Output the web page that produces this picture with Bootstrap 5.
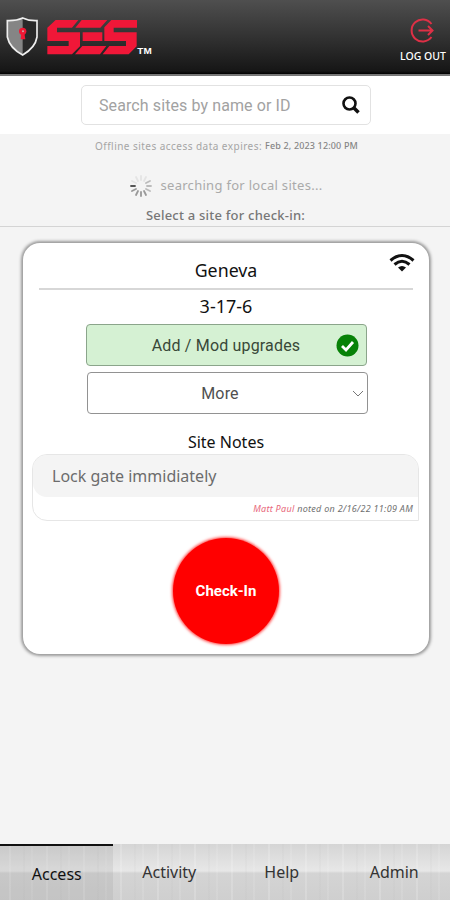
<!DOCTYPE html>
<html lang="en">
<head>
<meta charset="utf-8">
<meta name="viewport" content="width=device-width, initial-scale=1">
<title>SES Site Access</title>
<link href="https://cdn.jsdelivr.net/npm/bootstrap@5.3.0/dist/css/bootstrap.min.css" rel="stylesheet">
<style>
body{font-family:"Noto Sans","Open Sans",sans-serif;background:#f4f4f4;color:#111;height:900px;overflow:hidden;line-height:1.2}
.topbar{height:76px;background:linear-gradient(#4f4f4f,#323232 50%,#161616 96%,#000);border-bottom:2px solid #777;padding:0 4px 0 6px}
.logout{color:#fff;font:500 10.5px/14px "Noto Sans",sans-serif;width:46px;padding-top:17px;white-space:nowrap}
.logout span{margin-top:1px}
.searchband{height:58px;padding:9px 0 0 2px}
.searchbox{width:290px;height:40px;border:1px solid #e2e2e2;border-radius:5px;padding:0 10px 0 17px;font:16px Roboto,sans-serif;color:#a2a2a2;letter-spacing:.1px}
.expires{height:24px;font-size:10px;color:#a5a5a5;letter-spacing:.46px;padding-left:3px}
.expires b{font-size:9px;font-weight:500;color:#858585;letter-spacing:.15px}
.searching{height:32px;margin-top:12px;font-size:13px;color:#aaa;padding-left:1px;letter-spacing:.29px}
.prompt{height:25px;font-size:13px;font-weight:500;color:#777;border-bottom:1px solid #d4d4d4;padding-top:4px;letter-spacing:.22px;padding-left:1px}
.site{width:406px;height:411px;margin:16px 0 0 23px;background:#fff;border-radius:17px;box-shadow:0 0 3px 2px #999;padding:0 10px}
.sitehead{height:47px;margin:0 6px;border-bottom:2px solid #d7d7d7;font-size:17.8px;padding-top:10px}
.wifi{top:10px;right:14px}
.code{font-size:18px;height:34px}
.opt{width:281px;height:42px;border:1px solid #929292;border-radius:4px;font:16px Roboto,sans-serif;color:#505050;letter-spacing:.17px}
.opt-on{background:#d5f1d3;color:#384838;border-color:#8ba58b}
.opt-more{margin:6px 0 0 2px;padding-right:14px}
.opt-icon{right:7px;top:9px}
.opt-chev{right:3px;top:16px}
.notes-title{font-size:16px;margin-top:19px;height:21px}
.note{width:387px;height:67px;border:1px solid #e6e6e6;border-radius:15px 15px 0 15px;margin-left:-1px}
.note-text{height:42px;background:#f4f4f4;border-radius:14px 14px 0 14px;padding:1px 0 0 19px;font-size:16px;color:#6c6c6c}
.note-meta{height:23px;font-size:9px;letter-spacing:.29px;font-style:italic;color:#707070;padding:2px 5px 0 0}
.note-meta em{color:#e8677b}
.checkin{width:106px;height:106px;background:#f00;box-shadow:0 0 3px 1px #f44;color:#fff;font:700 15px Roboto,sans-serif;margin-top:17px}
.tabs{height:56px;background:repeating-linear-gradient(90deg,#fff0 0 9px,#fff5 10px,#fff0 11px 23px,#aaa2 24px,#fff0 25px 31px,#fff3 32px,#fff0 33px 37px),linear-gradient(#d5d5d5,#e7e7e7 48%,#d4d4d4 52%,#cfcfcf)}
.tab{font-size:16px;color:#333;padding:1px 0 0 1px}
.tab-on{border-top:2px solid #111;color:#111;background:#88888826;padding-top:3px}
</style>
<script src="https://cdn.jsdelivr.net/npm/bootstrap@5.3.0/dist/js/bootstrap.bundle.min.js"></script>
</head>
<body class="d-flex flex-column">
<header class="topbar d-flex justify-content-between flex-shrink-0">
  <svg width="150" height="74" viewBox="18 0 450 222">
    <path d="M22 62Q49 63 68 54Q86 63 111 62V111Q106 143 68 165Q29 144 22 111Z" fill="#858585"/>
    <path d="M68 55Q86 63 111 62V111Q106 143 68 165Z" fill="#292929"/>
    <path d="M22 62Q49 63 68 54Q86 63 111 62V111Q106 143 68 165Q29 144 22 111Z" fill="none" stroke="#eee" stroke-width="5"/>
    <circle cx="68" cy="94" r="11" fill="#f01834"/><path d="M64 98H73L76 118H62Z" fill="#f01834"/><circle cx="69" cy="94" r="3" fill="#caa"/>
    <g fill="#f01738">
      <path d="M167 60H235L216 83H171V97H240V139L216 163H142V138H206V123H142V83Z"/>
      <path d="M245 60H322L301 83H226ZM248 97H307V123H248ZM247 138H319L300 163H225Z"/>
      <path d="M334 60H411V83H341V97H410V139L386 163H308L328 138H378V123H313V82Z"/>
    </g>
    <text x="412" y="161" fill="#fff" font-family="Liberation Sans" font-weight="700" font-size="28" textLength="43" lengthAdjust="spacingAndGlyphs">TM</text>
  </svg>
  <div class="logout d-flex flex-column align-items-center">
    <svg class="mb-1 flex-shrink-0" width="26" height="27" viewBox="0 0 26 27" fill="none" stroke="#de3046" stroke-width="2"><path d="M21.500 7A11 11 0 1 0 21.500 20M8.500 13.500H22.500M18 9L22.500 13.500L18 18"/></svg>
    <span>LOG OUT</span>
  </div>
</header>
<main class="flex-grow-1">
  <div class="searchband bg-white d-flex justify-content-center align-items-start">
    <div class="searchbox d-flex align-items-center justify-content-between">
      <span>Search sites by name or ID</span>
      <svg width="18" height="18" viewBox="0 0 18 18" fill="none" stroke="#111"><circle cx="7.500" cy="7.500" r="6" stroke-width="2.600"/><path d="M12 12L16.500 16.500" stroke-width="3.600"/></svg>
    </div>
  </div>
  <div class="expires d-flex justify-content-center align-items-center">Offline sites access data expires:&nbsp;<b>Feb 2, 2023 12:00 PM</b></div>
  <div class="searching d-flex justify-content-center align-items-center gap-2">
    <svg width="24" height="24" viewBox="-12 -12 24 24" stroke-width="1.800" stroke-linecap="round">
      <g stroke="#e4e4e4"><path d="M0-6V-10M3-5L5-9M-3-5L-5-9M-5-3L-9-5"/></g><g stroke="#bbb"><path d="M5-3L9-5M6 0H10M5 3L9 5"/></g><g stroke="#999"><path d="M3 5L5 9M0 6V10M-3 5L-5 9M-5 3L-9 5"/></g><path stroke="#555" d="M-6 0H-10"/>
    </svg><span>searching for local sites...</span>
  </div>
  <div class="prompt d-flex justify-content-center align-items-center">Select a site for check-in:</div>
  <section class="site position-relative d-flex flex-column align-items-center">
    <div class="sitehead align-self-stretch d-flex justify-content-center align-items-center">Geneva</div>
    <svg class="wifi position-absolute" width="26" height="20" viewBox="0 0 26 20" fill="none" stroke="#111" stroke-width="3"><path d="M1.500 7.500Q13-2.500 24.500 7.500M5.500 11.500Q13 5 20.500 11.500"/><path d="M9 14.500Q13 11.500 17 14.500L13 18.500Z" fill="#111" stroke="none"/></svg>
    <div class="code d-flex align-items-center">3-17-6</div>
    <div class="opt opt-on position-relative d-flex align-items-center justify-content-center">Add / Mod upgrades
      <svg class="opt-icon position-absolute" width="23" height="23" viewBox="0 0 23 23"><circle cx="11.500" cy="11.500" r="11" fill="#078207"/><path d="M6 12L10 16L17 8" fill="none" stroke="#fff" stroke-width="2.800"/></svg>
    </div>
    <div class="opt opt-more position-relative d-flex align-items-center justify-content-center"><span>More</span>
      <svg class="opt-chev position-absolute" width="12" height="9" viewBox="0 0 12 9" fill="none" stroke="#777"><path d="M1 2L6 7L11 2"/></svg>
    </div>
    <div class="notes-title">Site Notes</div>
    <div class="note">
      <div class="note-text d-flex align-items-center">Lock gate immidiately</div>
      <div class="note-meta d-flex justify-content-end align-items-center"><em>Matt Paul</em>&nbsp;noted on 2/16/22 11:09 AM</div>
    </div>
    <div class="checkin rounded-circle d-flex align-items-center justify-content-center">Check-In</div>
  </section>
</main>
<nav class="tabs row g-0 flex-shrink-0">
  <div class="tab tab-on col-3 d-flex align-items-center justify-content-center">Access</div>
  <div class="tab col-3 d-flex align-items-center justify-content-center">Activity</div>
  <div class="tab col-3 d-flex align-items-center justify-content-center">Help</div>
  <div class="tab col-3 d-flex align-items-center justify-content-center">Admin</div>
</nav>
</body>
</html>
